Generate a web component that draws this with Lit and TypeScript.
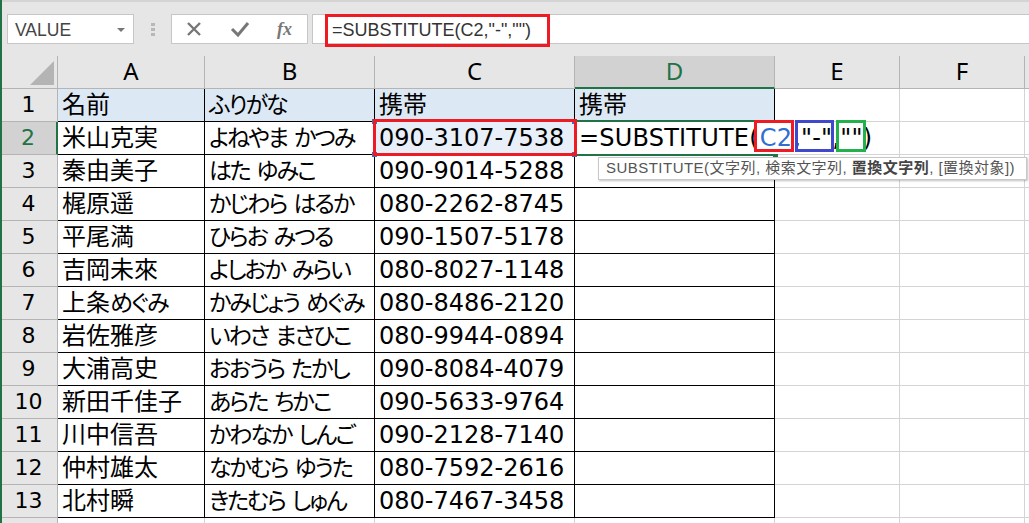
import { LitElement, html, css } from "lit";
import { customElement } from "lit/decorators.js";

const ROWS: string[][] = [
  ["名前", "ふりがな", "携帯", "携帯"],
  ["米山克実", "よねやま かつみ", "090-3107-7538", ""],
  ["秦由美子", "はた ゆみこ", "090-9014-5288", ""],
  ["梶原遥", "かじわら はるか", "080-2262-8745", ""],
  ["平尾満", "ひらお みつる", "090-1507-5178", ""],
  ["吉岡未來", "よしおか みらい", "080-8027-1148", ""],
  ["上条めぐみ", "かみじょう めぐみ", "080-8486-2120", ""],
  ["岩佐雅彦", "いわさ まさひこ", "080-9944-0894", ""],
  ["大浦高史", "おおうら たかし", "090-8084-4079", ""],
  ["新田千佳子", "あらた ちかこ", "090-5633-9764", ""],
  ["川中信吾", "かわなか しんご", "090-2128-7140", ""],
  ["仲村雄太", "なかむら ゆうた", "080-7592-2616", ""],
  ["北村瞬", "きたむら しゅん", "080-7467-3458", ""],
];

const kana = (t: string) =>
  t.split(/([ぁ-ん ]+)/).map((p, i) => (i % 2 ? html`<span class="k">${p}</span>` : p));

@customElement("app-root")
export class AppRoot extends LitElement {
  static styles = css`
    :host {
      display: block;
      width: 1029px;
      height: 523px;
      overflow: hidden;
      position: relative;
      background: #fff;
      font-family: "Noto Sans", "Noto Sans CJK JP", sans-serif;
      color: #000;
    }
    .edge { position: absolute; left: 0; top: 0; bottom: 0; width: 2px; background: #217346; z-index: 5; }
    .bar {
      height: 56px;
      box-sizing: border-box;
      background: #e6e6e6;
      border-top: 2px solid #d4d4d4;
      padding: 12px 0 0 7px;
      display: flex;
      align-items: flex-start;
    }
    .box { height: 30px; box-sizing: border-box; background: #fff; border: 1px solid #c6c6c6; display: flex; align-items: center; }
    .name { width: 127px; padding: 2px 8px 0 7px; justify-content: space-between; font: 17.5px "Liberation Sans", sans-serif; color: #444; }
    .caret { width: 0; height: 0; border-left: 4px solid transparent; border-right: 4px solid transparent; border-top: 4px solid #777; }
    .dots { width: 37px; display: flex; flex-direction: column; align-items: center; gap: 2px; padding-top: 9px; }
    .dots i { width: 4px; height: 3px; background: #b8b8b8; display: block; }
    .btns { width: 137px; gap: 27px; padding-left: 13px; }
    .fx { font: italic 700 18px "Liberation Serif", serif; color: #777; }
    .formula { margin-left: 4px; flex: 1; padding: 2px 0 0 19px; font: 18px "Liberation Sans", sans-serif; color: #333; border-right: none; }
    .sheet {
      display: grid;
      grid-template-columns: 58px 147px 170px 200px 200px 125px 125px 5px;
      grid-auto-rows: 33px;
    }
    .sheet > div { box-sizing: border-box; display: flex; align-items: center; white-space: pre; }
    .corner, .ch, .rh { background: #e6e6e6; border-right: 1px solid #b4b4b4; border-bottom: 1px solid #b4b4b4; }
    .corner { position: relative; height: 33px; }
    .tri { position: absolute; right: 3px; bottom: 3px; width: 0; height: 0; border-left: 24px solid transparent; border-bottom: 24px solid #b4b4b4; }
    .ch, .rh { justify-content: center; font: 22px/26px "DejaVu Sans", sans-serif; }
    .ch { font: 24px/28px "Noto Sans", sans-serif; padding-bottom: 2px; }
    .ch.d { background: #d2d2d2; color: #217346; border-bottom: 2px solid #217346; }
    .rh.d { background: #d2d2d2; color: #217346; border-right: 2px solid #217346; }
    .c { padding: 0 0 3px 4px; font-size: 24px; line-height: 28px; font-feature-settings: "palt"; border-right: 1px solid #000; border-bottom: 1px solid #000; }
    .k { font-size: 23px; letter-spacing: -2px; word-spacing: 3px; }
    .c.h { background: #dce9f5; }
    .c.phone { font-family: "DejaVu Sans", sans-serif; font-feature-settings: normal; padding-bottom: 0; }
    .c.sel { background: #e8eff9; }
    .c.editing { border-right-color: transparent; }
    .e { border-right: 1px solid #d4d4d4; border-bottom: 1px solid #d4d4d4; }
    .mark { position: absolute; box-sizing: border-box; border: 3px solid #ed1c24; pointer-events: none; }
    .mark.fb { left: 325px; top: 14px; width: 225px; height: 33px; }
    .mark.c2 { left: 373px; top: 119px; width: 204px; height: 37px; z-index: 3; }
    .mark.r { left: 754px; top: 120px; width: 40px; height: 32px; z-index: 3; }
    .mark.b { left: 795px; top: 120px; width: 39px; height: 32px; border-color: #3f48cc; z-index: 3; }
    .mark.g { left: 836px; top: 120px; width: 30px; height: 32px; border-color: #22b14c; z-index: 3; }
    .hd { position: absolute; width: 5px; height: 5px; background: #3b6fc4; z-index: 2; }
    .hd.tl { left: 372px; top: 119px; }
    .hd.tr { left: 572px; top: 119px; }
    .hd.bl { left: 372px; top: 152px; }
    .hd.br { left: 572px; top: 152px; }
    .edit {
      position: absolute; left: 575px; top: 120px; width: 198px; height: 36px; box-sizing: border-box;
      border-top: 2px solid #217346; border-bottom: 2px solid #217346;
      padding-left: 4px; font: 24px/32px "DejaVu Sans", sans-serif; letter-spacing: 0.2px; white-space: nowrap; z-index: 2;
    }
    .edit b { font-weight: 400; color: #2f6fcf; margin-left: 1px; margin-right: 1px; }
    .fill { position: absolute; left: 773px; top: 154px; width: 5px; height: 5px; background: #217346; z-index: 2; }
    .tip {
      position: absolute; left: 598px; top: 157px; width: 429px; height: 23px; box-sizing: border-box; z-index: 4;
      background: #fff; border: 1px solid #c8c8c8; box-shadow: 1px 1px 2px rgba(0,0,0,.25);
      font: 15px/20px "Liberation Sans", "Noto Sans CJK JP", sans-serif; letter-spacing: 0.47px; padding-left: 7px; color: #555; white-space: nowrap;
    }
    .tip b { font-weight: 700; color: #444; }
  `;

  render() {
    return html`
      <div class="edge"></div>
      <div class="bar">
        <div class="box name">VALUE<span class="caret"></span></div>
        <div class="dots"><i></i><i></i><i></i></div>
        <div class="box btns">
          <svg width="18" height="18" viewBox="0 0 18 18"><path d="M3 3l12 12M15 3L3 15" stroke="#777" stroke-width="2.4" fill="none"/></svg>
          <svg width="20" height="18" viewBox="0 0 20 18"><path d="M2 9l6 6L18 3" stroke="#777" stroke-width="3" fill="none"/></svg>
          <span class="fx">fx</span>
        </div>
        <div class="box formula">=SUBSTITUTE(C2,"-","")</div>
      </div>
      <div class="sheet">
        <div class="corner"><span class="tri"></span></div>
        ${["A", "B", "C", "D", "E", "F"].map((c) => html`<div class="ch ${c === "D" ? "d" : ""}">${c}</div>`)}
        <div class="ch"></div>
        ${ROWS.map(
          (r, i) => html`
            <div class="rh ${i === 1 ? "d" : ""}">${i + 1}</div>
            ${r.map((t, j) => {
              const cls = [
                "c",
                i === 0 ? "h" : "",
                i > 0 && j === 2 ? "phone" : "",
                i === 1 && j === 2 ? "sel" : "",
                i === 1 && j === 3 ? "editing" : "",
              ].join(" ");
              return html`<div class="${cls}">${kana(t)}</div>`;
            })}
            <div class="e"></div><div class="e"></div><div class="e"></div>
          `
        )}
        <div class="rh"></div>
        ${[0, 1, 2, 3, 4, 5, 6].map(() => html`<div class="e"></div>`)}
      </div>
      <div class="mark fb"></div>
      <div class="mark c2"></div>
      <span class="hd tl"></span>
      <span class="hd tr"></span>
      <span class="hd bl"></span>
      <span class="hd br"></span>
      <div class="edit">=SUBSTITUTE(<b>C2</b>,"-","")</div>
      <div class="fill"></div>
      <div class="mark r"></div>
      <div class="mark b"></div>
      <div class="mark g"></div>
      <div class="tip">SUBSTITUTE(文字列, 検索文字列, <b>置換文字列</b>, [置換対象])</div>
    `;
  }
}
